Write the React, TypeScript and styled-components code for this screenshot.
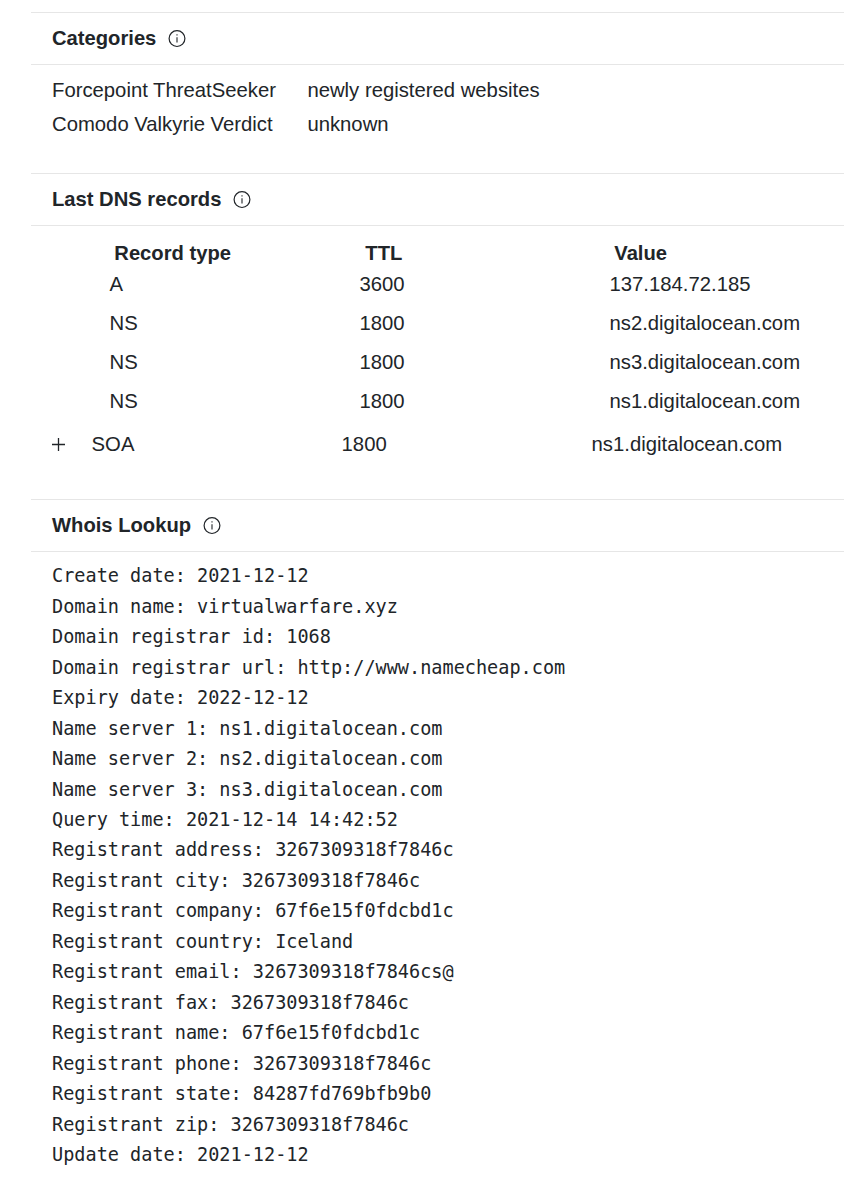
import React from "react";
import styled, { createGlobalStyle } from "styled-components";

const GlobalStyle = createGlobalStyle`
  * { box-sizing: border-box; }
  body {
    margin: 0;
    background: #fff;
    color: #212529;
    font: 20.3px/30.46px "Liberation Sans", Arial, sans-serif;
  }
`;

const Page = styled.main`
  display: flex;
  flex-direction: column;
  height: 1191px;
  padding: 12px 0 0 31px;
  overflow: hidden;
`;

const Section = styled.section<{ $height?: number }>`
  display: flex;
  flex-direction: column;
  flex: none;
  height: ${(p) => (p.$height ? `${p.$height}px` : "auto")};
`;

const SectionHeader = styled.header`
  display: flex;
  align-items: center;
  gap: 12px;
  height: 53px;
  flex: none;
  padding-left: 21px;
  border-top: 1px solid #e6e6e6;
  border-bottom: 1px solid #e6e6e6;
`;

const Title = styled.h2`
  margin: 0;
  font-size: 20.2px;
  font-weight: 700;
  white-space: nowrap;
`;

const InfoSvg = styled.svg`
  flex: none;
  width: 18px;
  height: 18px;
  fill: none;
  stroke: #212529;
`;

const CategoryList = styled.dl`
  display: grid;
  grid-template-columns: 255.4px 1fr;
  row-gap: 3.6px;
  margin: 0;
  padding: 10px 0 0 21px;
`;

const Term = styled.dt`
  white-space: nowrap;
`;

const Detail = styled.dd`
  margin: 0;
`;

const Records = styled.div`
  display: flex;
  flex-direction: column;
  padding-top: 12px;
`;

const RecordRow = styled.div<{ $indent: number; $height: number; $head?: boolean }>`
  display: grid;
  grid-template-columns: ${(p) => (p.$head ? "251px 249px" : "250px 250px")} 1fr;
  align-items: center;
  height: ${(p) => p.$height}px;
  padding-left: ${(p) => p.$indent}px;
  font-size: ${(p) => (p.$head ? 20.2 : 20.3)}px;
  font-weight: ${(p) => (p.$head ? 700 : 400)};
  white-space: nowrap;
`;

const ExpandableRow = styled.div`
  display: flex;
  align-items: center;
  height: 47px;
  padding-left: 20px;
`;

const ExpandSvg = styled.svg`
  flex: none;
  width: 15px;
  height: 15px;
  stroke: #212529;
`;

const WhoisText = styled.pre`
  margin: 0;
  padding: 9.4px 0 0 21px;
  font: 18.55px/30.46px "DejaVu Sans Mono", monospace;
`;

const InfoIcon = () => (
  <InfoSvg viewBox="0 0 18 18">
    <circle cx="9" cy="8.6" r="7.9" strokeWidth="1.2" />
    <path d="M9 7.2v5.4M9 4.2v1.4" strokeWidth="1.1" />
  </InfoSvg>
);

const Header = ({ title }: { title: string }) => (
  <SectionHeader>
    <Title>{title}</Title>
    <InfoIcon />
  </SectionHeader>
);

const records = [
  ["A", "3600", "137.184.72.185"],
  ["NS", "1800", "ns2.digitalocean.com"],
  ["NS", "1800", "ns3.digitalocean.com"],
  ["NS", "1800", "ns1.digitalocean.com"],
];

const whois = `Create date: 2021-12-12
Domain name: virtualwarfare.xyz
Domain registrar id: 1068
Domain registrar url: http://www.namecheap.com
Expiry date: 2022-12-12
Name server 1: ns1.digitalocean.com
Name server 2: ns2.digitalocean.com
Name server 3: ns3.digitalocean.com
Query time: 2021-12-14 14:42:52
Registrant address: 3267309318f7846c
Registrant city: 3267309318f7846c
Registrant company: 67f6e15f0fdcbd1c
Registrant country: Iceland
Registrant email: 3267309318f7846cs@
Registrant fax: 3267309318f7846c
Registrant name: 67f6e15f0fdcbd1c
Registrant phone: 3267309318f7846c
Registrant state: 84287fd769bfb9b0
Registrant zip: 3267309318f7846c
Update date: 2021-12-12`;

export default function App() {
  return (
    <Page>
      <GlobalStyle />
      <Section $height={161}>
        <Header title="Categories" />
        <CategoryList>
          <Term>Forcepoint ThreatSeeker</Term>
          <Detail>newly registered websites</Detail>
          <Term>Comodo Valkyrie Verdict</Term>
          <Detail>unknown</Detail>
        </CategoryList>
      </Section>
      <Section $height={326}>
        <Header title="Last DNS records" />
        <Records>
          <RecordRow $head $indent={83.3} $height={27}>
            <span>Record type</span>
            <span>TTL</span>
            <span>Value</span>
          </RecordRow>
          {records.map(([type, ttl, value], i) => (
            <RecordRow key={i} $indent={78.5} $height={39}>
              <span>{type}</span>
              <span>{ttl}</span>
              <span>{value}</span>
            </RecordRow>
          ))}
          <ExpandableRow>
            <ExpandSvg viewBox="0 0 15 15">
              <path d="M1 7.5h13M7.5 1v13" strokeWidth="1.3" />
            </ExpandSvg>
            <RecordRow $indent={25.6} $height={39}>
              <span>SOA</span>
              <span>1800</span>
              <span>ns1.digitalocean.com</span>
            </RecordRow>
          </ExpandableRow>
        </Records>
      </Section>
      <Section>
        <Header title="Whois Lookup" />
        <WhoisText>{whois}</WhoisText>
      </Section>
    </Page>
  );
}
